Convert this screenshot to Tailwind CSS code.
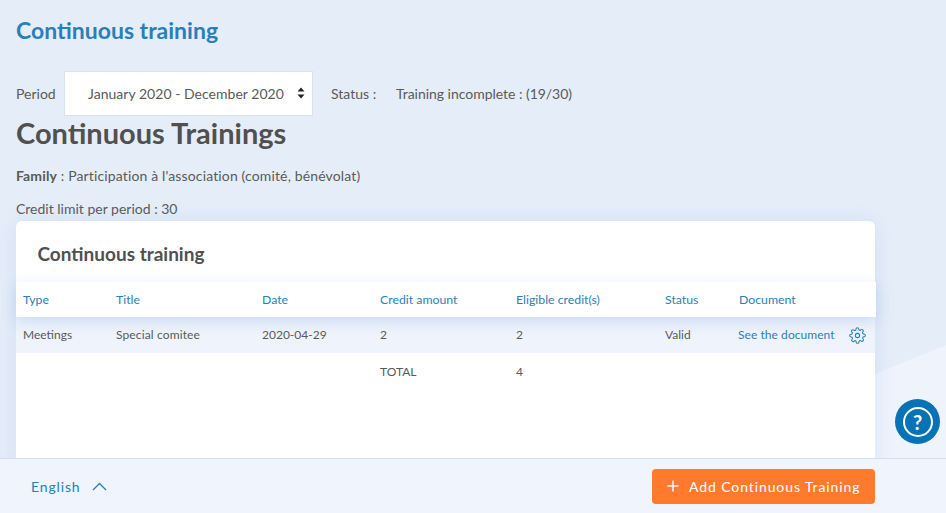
<!DOCTYPE html>
<html><head><meta charset="utf-8"><script src="https://cdn.jsdelivr.net/npm/@tailwindcss/browser@4"></script></head>
<body class="m-0">
<div class="relative w-[946px] h-[513px] overflow-hidden bg-[#e5edf8] font-['Lato','Noto_Sans',sans-serif] text-[#5a5a5a]">
  <svg class="absolute left-0 top-0" width="946" height="513" viewBox="0 0 946 513"><polygon points="860,380 946,345 946,513 860,513" fill="#eef3fc"/></svg>
  <div class="relative pl-4 pt-[17px] w-[946px]">
    <h1 class="text-[23px] leading-[26px] font-bold text-[#2a7fba] m-0">Continuous training</h1>
    <div class="flex items-center mt-[28px] h-[45px] text-[14px]">
      <span class="w-[48px]">Period</span>
      <div class="relative w-[249px] h-[45px] bg-white border border-[#d9e2ee] flex items-center pl-[23px] text-[14px] tracking-[0.03px]">January 2020 - December 2020
        <svg class="absolute left-[232px] top-[15px]" width="8" height="12" viewBox="0 0 8 12"><path d="M4 0.5 L7.5 4.5 H0.5 Z M4 11.5 L7.5 7.5 H0.5 Z" fill="#222"/></svg>
      </div>
      <span class="ml-[18px] w-[65px]">Status :</span>
      <span class="tracking-[-0.03px]">Training incomplete : (19/30)</span>
    </div>
    <h2 class="text-[29px] leading-[36px] -mt-[1px] font-bold text-[#505050] m-0">Continuous Trainings</h2>
    <p class="text-[14px] leading-5 mt-[15px] m-0 tracking-[0.14px]"><b class="font-bold">Family</b> : Participation à l'association (comité, bénévolat)</p>
    <p class="text-[14px] leading-5 mt-[13px] m-0">Credit limit per period : 30</p>
    <div class="relative mt-[2px] w-[859px] h-[300px] bg-white rounded-t-[6px] shadow-[0_0_20px_rgba(120,160,230,0.16)]">
      <h3 class="text-[19px] leading-6 font-bold pl-[21.5px] pt-[21px] h-[61px] m-0 text-[#505050]">Continuous training</h3>
      <div class="grid grid-cols-[93px_146px_118px_136px_149px_74px_1fr] pl-[7px] pt-[2px] items-center h-[35px] w-[860px] bg-white text-[12.3px] text-[#2a7fba] relative z-10 shadow-[0_4px_14px_rgba(120,160,230,0.3)]">
        <span>Type</span><span>Title</span><span>Date</span><span>Credit amount</span><span>Eligible credit(s)</span><span>Status</span><span>Document</span>
      </div>
      <div class="grid grid-cols-[93px_146px_118px_136px_149px_74px_1fr] pl-[7px] items-center h-[36px] bg-[#eef3fc] text-[12px]">
        <span>Meetings</span><span class="tracking-[0.13px]">Special comitee</span><span>2020-04-29</span><span>2</span><span>2</span><span>Valid</span>
        <span class="flex items-center text-[#2a7fba] -ml-[1px]"><span class="tracking-[0.06px]">See the document</span>
          <svg class="ml-[14px]" width="17" height="17" viewBox="0 0 24 24" fill="none" stroke="#2a7fba" stroke-width="1.5" stroke-linecap="round" stroke-linejoin="round"><circle cx="12" cy="12" r="3"/><path d="M19.4 15a1.65 1.65 0 0 0 .33 1.82l.06.06a2 2 0 1 1-2.83 2.83l-.06-.06a1.65 1.65 0 0 0-2.82 1.17V21a2 2 0 1 1-4 0v-.09a1.65 1.65 0 0 0-2.82-1.12l-.06.06a2 2 0 1 1-2.83-2.83l.06-.06a1.65 1.65 0 0 0-1.17-2.82H3a2 2 0 1 1 0-4h.09a1.65 1.65 0 0 0 1.12-2.82l-.06-.06a2 2 0 1 1 2.83-2.83l.06.06a1.65 1.65 0 0 0 2.82-1.17V3a2 2 0 1 1 4 0v.09a1.65 1.65 0 0 0 2.82 1.12l.06-.06a2 2 0 1 1 2.83 2.83l-.06.06a1.65 1.65 0 0 0 1.17 2.82H21a2 2 0 1 1 0 4h-.09a1.65 1.65 0 0 0-1.51 1.14z"/></svg>
        </span>
      </div>
      <div class="grid grid-cols-[93px_146px_118px_136px_149px_74px_1fr] pl-[7px] items-center h-[37px] text-[12px]">
        <span></span><span></span><span></span><span>TOTAL</span><span>4</span><span></span><span></span>
      </div>
    </div>
  </div>
  <div class="absolute left-[895px] top-[399px] w-[45px] h-[45px] rounded-full bg-[#0573b5] flex items-center justify-center">
    <div class="w-[30px] h-[30px] rounded-full border-2 border-white flex items-center justify-center text-white text-[20px] font-bold leading-none">?</div>
  </div>
  <div class="absolute left-0 bottom-0 w-[946px] h-[55px] bg-[#eff4fd] border-t border-[#d5deea] flex items-center justify-between pl-[31px] pr-[71px]">
    <div class="flex items-center gap-[12px] text-[14px] tracking-[0.85px] text-[#2a7fba]">English
      <svg width="15" height="9" viewBox="0 0 15 9" fill="none" stroke="#2a7fba" stroke-width="1.3"><path d="M1 8 L7.5 1.5 L14 8"/></svg>
    </div>
    <button class="w-[223px] h-[35px] rounded-[4px] bg-[#ff7a2d] text-white text-[14px] tracking-[0.9px] flex items-center pl-[15px] gap-[10px]">
      <svg width="12" height="12" viewBox="0 0 12 12" stroke="#fff" stroke-width="1.4"><path d="M6 0.5V11.5M0.5 6H11.5"/></svg>
      Add Continuous Training
    </button>
  </div>
</div>
</body></html>
